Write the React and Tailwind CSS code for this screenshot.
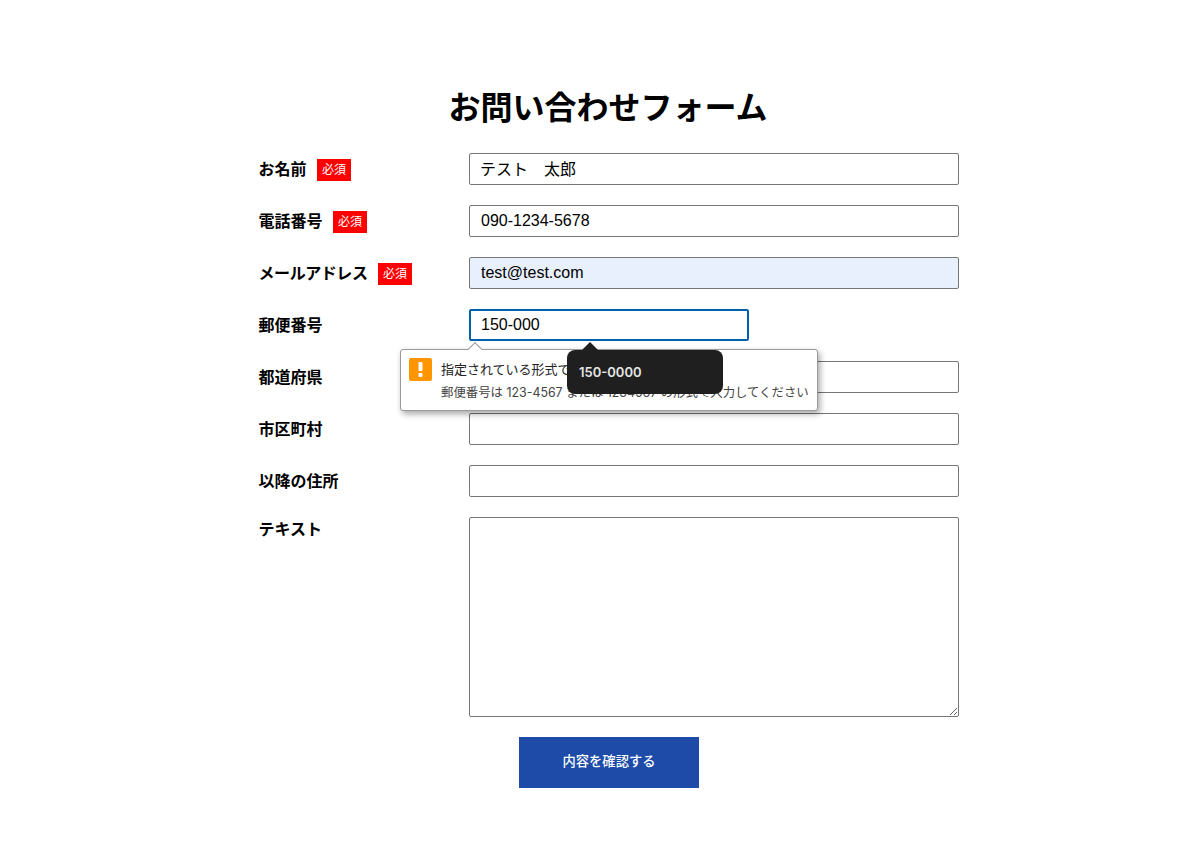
const sans = "font-['Liberation_Sans','Noto_Sans_CJK_JP',sans-serif]";

function Required() {
   return (
      <span className="ml-[10.5px] inline-flex h-[22px] w-[34px] items-center justify-center bg-[#ff0000] text-xs font-normal tracking-normal text-white">
         必須
      </span>
   );
}

function Row({ label, required, labelClass = "h-8 pt-0.5", children }) {
   return (
      <div className="flex items-start">
         <label className={`-ml-[0.5px] flex w-[210.5px] shrink-0 items-center text-base font-bold text-black ${labelClass}`}>
            {label}
            {required && <Required />}
         </label>
         {children}
      </div>
   );
}

function TextInput({ value = "", className = "w-[490px] border border-[#767676] bg-white" }) {
   return (
      <input
         readOnly
         value={value}
         className={`h-8 rounded-[2px] px-[11px] text-base text-black outline-none ${className}`}
      />
   );
}

function ValidationPopover() {
   return (
      <div className="absolute left-[-69px] top-10 z-10 h-[62px] w-[418px] rounded-[3px] border border-[#9a9a9a] bg-white font-['Inter','Noto_Sans_CJK_JP',sans-serif] shadow-[2px_3px_6px_rgba(0,0,0,0.35)]">
         <div className="absolute left-[69px] top-[-6px] size-[10px] rotate-45 border-l border-t border-[#9a9a9a] bg-white" />
         <div className="absolute left-2 top-2 flex h-[23px] w-[23px] items-center justify-center rounded-[2px] bg-[#ff9500]">
            <svg width="5" height="15" viewBox="0 0 5 15">
               <rect x="0.5" y="0" width="4" height="9" rx="1" fill="#fff" />
               <rect x="0.5" y="11" width="4" height="4" rx="1" fill="#fff" />
            </svg>
         </div>
         <p className="absolute left-10 top-[10px] whitespace-nowrap text-[13px] leading-[18px] text-[#222]">
            指定されている形式で入力してください
         </p>
         <p className="absolute left-10 top-[34px] whitespace-nowrap text-[12.4px] leading-[18px] text-[#444]">
            郵便番号は 123-4567 または 1234567 の形式で入力してください
         </p>
      </div>
   );
}

function AutofillTip() {
   return (
      <div className="absolute left-[98px] top-[41px] z-20 flex h-11 w-[156px] items-center rounded-lg bg-[#1f1f1f] px-3 pt-0.5 font-['Inter',sans-serif] text-[13px] font-semibold text-[#e6e6e6]">
         <div className="absolute left-[14px] top-[-8px] h-0 w-0 border-x-[9px] border-b-[9px] border-x-transparent border-b-[#1f1f1f]" />
         150-0000
      </div>
   );
}

export default function App() {
   return (
      <div className={`min-h-[862px] bg-white pt-[84px] ${sans}`}>
         <div className="ml-[259px] w-[700px]">
            <h1 className="mb-[21px] h-12 pr-0.5 text-center text-[32px] font-bold leading-[48px] text-black">
               お問い合わせフォーム
            </h1>
            <div className="flex flex-col gap-5">
               <Row label="お名前" required>
                  <TextInput value="テスト　太郎" className="w-[490px] border border-[#767676] bg-white !pb-[3px] !pl-[10px]" />
               </Row>
               <Row label="電話番号" required>
                  <TextInput value="090-1234-5678" />
               </Row>
               <Row label={<span className="tracking-[-0.43px]">メールアドレス</span>} required>
                  <TextInput value="test@test.com" className="w-[490px] border border-[#767676] bg-[#e8f0fe]" />
               </Row>
               <Row label="郵便番号">
                  <div className="relative">
                     <TextInput
                        value="150-000"
                        className="w-[280px] border-2 border-[#0062ad] bg-white !px-[10px]"
                     />
                     <ValidationPopover />
                     <AutofillTip />
                  </div>
               </Row>
               <Row label="都道府県">
                  <TextInput />
               </Row>
               <Row label="市区町村">
                  <TextInput />
               </Row>
               <Row label="以降の住所">
                  <TextInput />
               </Row>
               <Row label="テキスト" labelClass="h-[25px]">
                  <textarea
                     readOnly
                     className="h-[200px] w-[490px] rounded-[2px] border border-[#767676] bg-white outline-none"
                  />
               </Row>
            </div>
            <button className="mx-auto mt-5 block h-[51px] w-[180px] bg-[#1e4ba8] pb-0.5 text-[13.3px] font-medium text-white">
               内容を確認する
            </button>
         </div>
      </div>
   );
}
